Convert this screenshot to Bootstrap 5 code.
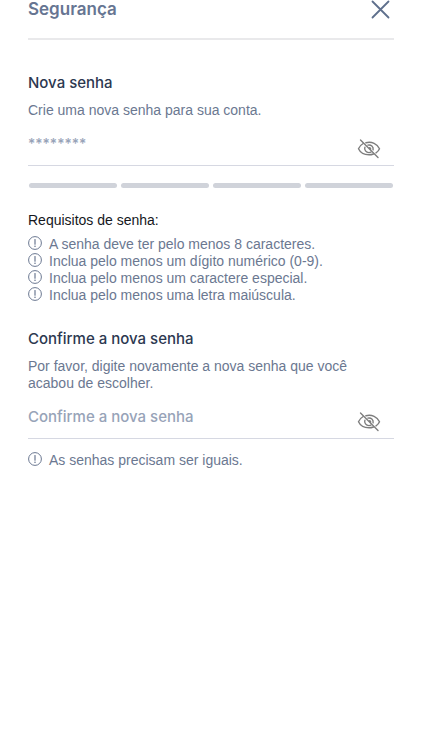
<!DOCTYPE html>
<html lang="pt-BR">
<head>
<meta charset="utf-8">
<meta name="viewport" content="width=device-width, initial-scale=1">
<title>Segurança</title>
<link href="https://cdn.jsdelivr.net/npm/bootstrap@5.3.0/dist/css/bootstrap.min.css" rel="stylesheet">
<style>
body{font-family:"Liberation Sans",Arial,sans-serif;font-size:14px;line-height:17px;color:#6b7891;background:#fff}
.top-bar,.field-title,.field-input{font-family:Inter,"Liberation Sans",sans-serif}
.page-wrap{padding:0 28px}
.top-bar{height:40px;border-bottom:2px solid #e9e9eb}
.top-bar h1{font-size:17px;line-height:18px;font-weight:600;color:#667592}
.close-btn{width:28px;height:20px;color:#5e6f8c}
.form-section{padding-top:33px}
.second-section{padding-top:25px}
.field-title{font-size:15px;line-height:20px;font-weight:500;color:#2c3850}
.field-help{margin:9px 0 7px}
.field-row{height:40px;border-bottom:1px solid #d6d8e2}
.field-input,.field-input:focus{font-size:15px;line-height:20px;font-weight:500;color:#667592;background:transparent;box-shadow:none}
.field-input::placeholder{color:#97a3b8;opacity:1}
.mask-input{font-size:14px}
.eye-btn{width:24px;height:24px;margin:11px 13px 0 0;color:#7d7d7d}
.meter{padding:0 1px;margin-top:17px}
.meter-track{height:5px;border-radius:3px;background:#d0d3da}
.req-title{font-size:14px;line-height:18px;color:#15171c;margin:23px 0 7px}
.note-row{gap:7px}
.match-note{margin:13px 0 0}
</style>
<script src="https://cdn.jsdelivr.net/npm/bootstrap@5.3.0/dist/js/bootstrap.bundle.min.js"></script>
</head>
<body>
<svg width="0" height="0" class="d-none" aria-hidden="true">
<symbol id="eye-off" viewBox="0 0 24 24"><g fill="none" stroke="currentColor" stroke-width="1.4" stroke-linecap="round"><path d="M6.200 6.500C4 7.700 2.300 9.600 1.500 11.800c1.700 3.700 5.900 6 10.500 6 1.600 0 3.100-.3 4.500-.8M8.900 5.700c5.800-1.500 11.500 1.100 13.600 6.100-.7 1.700-1.900 3.100-3.500 4.100M7.900 10.200c-1 2.700 1.200 5.400 4.100 5.400.7 0 1.300-.1 1.900-.4M10.900 8.100c3.100-.7 5.800 1.600 5.200 4.700"/><path d="M12.500 10.700c.6.200 1 .6 1.200 1.200M3.500 3l17.500 17.500"/></g></symbol>
<symbol id="alert-ring" viewBox="0 0 14 14"><circle cx="7" cy="7" r="6.400" fill="none" stroke="currentColor"/><path d="M7 3.500v4.700" stroke="currentColor" stroke-width="1.200" stroke-linecap="round"/><circle cx="7" cy="10.200" r=".8" fill="currentColor"/></symbol>
</svg>
<main class="page-wrap">
  <header class="top-bar d-flex justify-content-between align-items-start">
    <h1 class="m-0">Segurança</h1>
    <button type="button" class="close-btn btn p-0 border-0 d-flex justify-content-center" aria-label="Fechar"><svg width="20" height="20" viewBox="0 0 20 20"><path d="M2.500 1.500l16 16M18.500 1.500l-16 16" stroke="currentColor" stroke-width="1.800" stroke-linecap="round"/></svg></button>
  </header>
  <form>
    <section class="form-section">
      <label for="senha" class="field-title d-block">Nova senha</label>
      <p class="field-help">Crie uma nova senha para sua conta.</p>
      <div class="field-row d-flex align-items-start">
        <input id="senha" type="password" placeholder="********" class="field-input mask-input form-control p-0 pt-2 border-0 rounded-0">
        <button type="button" class="eye-btn btn p-0 border-0 flex-shrink-0 d-flex" aria-label="Mostrar senha"><svg width="24" height="24"><use href="#eye-off"/></svg></button>
      </div>
      <div class="meter d-flex gap-1" aria-hidden="true">
        <div class="meter-track flex-fill"></div><div class="meter-track flex-fill"></div><div class="meter-track flex-fill"></div><div class="meter-track flex-fill"></div>
      </div>
      <h2 class="req-title fw-normal">Requisitos de senha:</h2>
      <ul class="list-unstyled m-0">
        <li class="note-row d-flex align-items-start"><svg width="14" height="14"><use href="#alert-ring"/></svg>A senha deve ter pelo menos 8 caracteres.</li>
        <li class="note-row d-flex align-items-start"><svg width="14" height="14"><use href="#alert-ring"/></svg>Inclua pelo menos um dígito numérico (0-9).</li>
        <li class="note-row d-flex align-items-start"><svg width="14" height="14"><use href="#alert-ring"/></svg>Inclua pelo menos um caractere especial.</li>
        <li class="note-row d-flex align-items-start"><svg width="14" height="14"><use href="#alert-ring"/></svg>Inclua pelo menos uma letra maiúscula.</li>
      </ul>
    </section>
    <section class="second-section">
      <label for="confirma" class="field-title d-block">Confirme a nova senha</label>
      <p class="field-help">Por favor, digite novamente a nova senha que você acabou de escolher.</p>
      <div class="field-row d-flex align-items-start">
        <input id="confirma" type="password" placeholder="Confirme a nova senha" class="field-input form-control p-0 pt-2 border-0 rounded-0">
        <button type="button" class="eye-btn btn p-0 border-0 flex-shrink-0 d-flex" aria-label="Mostrar confirmação da senha"><svg width="24" height="24"><use href="#eye-off"/></svg></button>
      </div>
      <p class="match-note note-row d-flex align-items-start"><svg width="14" height="14"><use href="#alert-ring"/></svg>As senhas precisam ser iguais.</p>
    </section>
  </form>
</main>
</body>
</html>
